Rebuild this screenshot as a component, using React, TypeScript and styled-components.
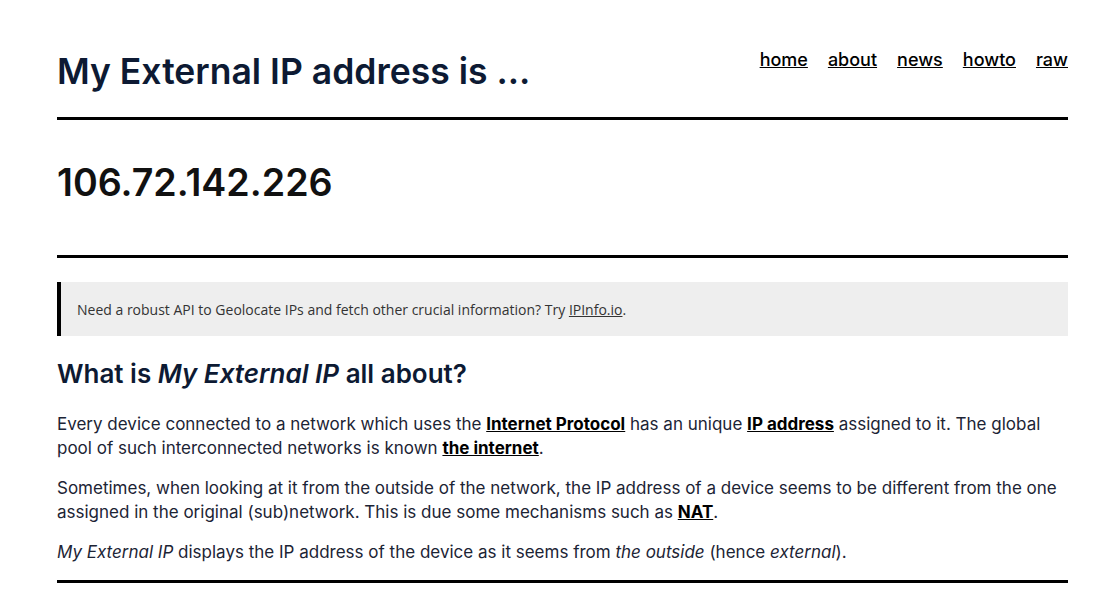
import React from "react";
import styled, { createGlobalStyle } from "styled-components";

const Global = createGlobalStyle`
  html, body { margin: 0; padding: 0; background: #fff; }
  body { font-family: Inter, "Noto Sans", sans-serif; color: #1c2435; }
`;

const Page = styled.div`
  padding: 0 41px 0 57px;
`;

const Header = styled.header`
  display: flex;
  justify-content: space-between;
  align-items: flex-start;
  padding-top: 50px;
`;

const Title = styled.h1`
  margin: 0 0 23px;
  font-size: 35.5px;
  font-weight: 600;
  line-height: 44px;
  color: #0d1a33;
`;

const Nav = styled.nav`
  display: flex;
  gap: 20px;
  margin-top: -1px;
`;

const NavLink = styled.a`
  font-size: 18px;
  font-weight: 500;
  color: #000;
  text-decoration: underline;
  line-height: 22px;
`;

const Rule = styled.hr`
  border: 0;
  height: 3px;
  background: #000;
  margin: 0;
`;

const Ip = styled.div`
  font-size: 37.6px;
  font-weight: 600;
  color: #111;
  line-height: 46px;
  padding: 40px 0 49px;
`;

const Banner = styled.div`
  margin-top: 24px;
  background: #eeeeee;
  border-left: 4px solid #000;
  padding: 18px 16px 17px 16px;
  font-family: "Open Sans", sans-serif;
  font-size: 14px;
  line-height: 19px;
  color: #333;
`;

const BannerLink = styled.a`
  color: #333;
  text-decoration: underline;
`;

const H2 = styled.h2`
  margin: 22px 0 22px;
  font-size: 26px;
  font-weight: 600;
  line-height: 32px;
  color: #0d1a33;
`;

const P = styled.p`
  margin: 0 0 16px;
  font-size: 17px;
  line-height: 24px;
`;

const B = styled.a`
  color: #000;
  font-weight: 700;
  text-decoration: underline;
`;

export default function App() {
  return (
    <>
      <Global />
      <Page>
        <Header>
          <Title>My External IP address is ...</Title>
          <Nav>
            <NavLink href="#">home</NavLink>
            <NavLink href="#">about</NavLink>
            <NavLink href="#">news</NavLink>
            <NavLink href="#">howto</NavLink>
            <NavLink href="#">raw</NavLink>
          </Nav>
        </Header>
        <Rule />
        <Ip>106.72.142.226</Ip>
        <Rule />
        <Banner>
          Need a robust API to Geolocate IPs and fetch other crucial information? Try{" "}
          <BannerLink href="#">IPInfo.io</BannerLink>.
        </Banner>
        <H2>
          What is <em>My External IP</em> all about?
        </H2>
        <P>
          Every device connected to a network which uses the <B href="#">Internet Protocol</B> has an unique{" "}
          <B href="#">IP address</B> assigned to it. The global pool of such interconnected networks is known{" "}
          <B href="#">the internet</B>.
        </P>
        <P>
          Sometimes, when looking at it from the outside of the network, the IP address of a device seems to be
          different from the one assigned in the original (sub)network. This is due some mechanisms such as{" "}
          <B href="#">NAT</B>.
        </P>
        <P>
          <em>My External IP</em> displays the IP address of the device as it seems from <em>the outside</em> (hence{" "}
          <em>external</em>).
        </P>
        <Rule />
      </Page>
    </>
  );
}
